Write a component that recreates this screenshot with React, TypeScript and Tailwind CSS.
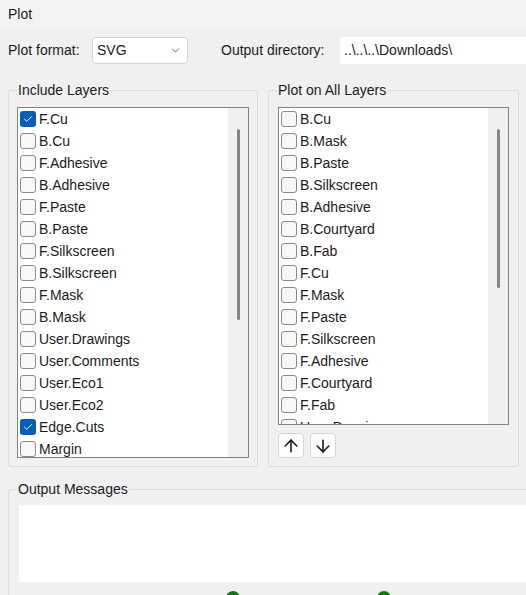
import { ArrowUp, ArrowDown, ChevronDown } from 'lucide-react'

const includeLayers = [
  { name: 'F.Cu', checked: true },
  { name: 'B.Cu', checked: false },
  { name: 'F.Adhesive', checked: false },
  { name: 'B.Adhesive', checked: false },
  { name: 'F.Paste', checked: false },
  { name: 'B.Paste', checked: false },
  { name: 'F.Silkscreen', checked: false },
  { name: 'B.Silkscreen', checked: false },
  { name: 'F.Mask', checked: false },
  { name: 'B.Mask', checked: false },
  { name: 'User.Drawings', checked: false },
  { name: 'User.Comments', checked: false },
  { name: 'User.Eco1', checked: false },
  { name: 'User.Eco2', checked: false },
  { name: 'Edge.Cuts', checked: true },
  { name: 'Margin', checked: false },
]

const allLayers = [
  'B.Cu',
  'B.Mask',
  'B.Paste',
  'B.Silkscreen',
  'B.Adhesive',
  'B.Courtyard',
  'B.Fab',
  'F.Cu',
  'F.Mask',
  'F.Paste',
  'F.Silkscreen',
  'F.Adhesive',
  'F.Courtyard',
  'F.Fab',
  'User.Drawings',
]

function Checkbox({ checked }: { checked: boolean }) {
  if (checked) {
    return (
      <span className="flex h-[16px] w-[16px] shrink-0 items-center justify-center rounded-[3px] bg-[#005fb8]">
        <svg width="10" height="8" viewBox="0 0 10 8" fill="none">
          <path d="M1.5 4.2 L3.8 6.3 L8.5 1.6" stroke="white" strokeWidth="1" strokeLinecap="round" strokeLinejoin="round" />
        </svg>
      </span>
    )
  }
  return <span className="h-[16px] w-[16px] shrink-0 rounded-[3px] border border-[#8a8a8a] bg-[#f7f7f7]" />
}

function LayerRow({ name, checked }: { name: string; checked: boolean }) {
  return (
    <div className="flex h-[22px] shrink-0 items-center gap-[3px] pl-[2px] text-[#1b1b1b]">
      <Checkbox checked={checked} />
      <span className="whitespace-nowrap">{name}</span>
    </div>
  )
}

function Scrollbar({ thumb }: { thumb: string }) {
  return (
    <div className="w-[20px] shrink-0 bg-[#f0f0f0]">
      <div className={`mx-auto mt-[21px] w-[3px] rounded-full bg-[#858585] ${thumb}`} />
    </div>
  )
}

export default function App() {
  return (
    <div
      className="h-[595px] w-[526px] overflow-hidden bg-[#f0f0f0] text-[14px] text-[#1b1b1b]"
      style={{ fontFamily: '"Liberation Sans", Arial, sans-serif' }}
    >
      {/* Title bar */}
      <div className="flex h-[30px] items-center bg-[#f3f3f3] px-[8px] pb-[2px]">Plot</div>

      {/* Format / directory row */}
      <div className="mt-[7px] flex h-[27px] items-center pl-[8px]">
        <span className="w-[84px] shrink-0">Plot format:</span>
        <div className="flex h-[27px] w-[96px] shrink-0 items-center justify-between rounded-[4px] border border-[#d4d4d4] bg-white pl-[4px] pr-[5px]">
          <span>SVG</span>
          <ChevronDown size={13} strokeWidth={1.3} className="text-[#444]" />
        </div>
        <span className="ml-[33px] w-[119px] shrink-0">Output directory:</span>
        <div className="flex h-[27px] w-[200px] shrink-0 items-center bg-white pl-[4px]">..\..\..\Downloads\</div>
      </div>

      {/* Layer groups */}
      <div className="mt-[16px] flex gap-[10px] pl-[8px]">
        <fieldset className="m-0 w-[250px] rounded-[2px] border border-[#dcdcdc] p-0">
          <legend className="ml-[8px] px-[1px] leading-[20px]">Include Layers</legend>
          <div className="px-[8px] pb-[7px] pt-[7px]">
            <div className="flex h-[351px] w-[232px] overflow-hidden border border-[#828282] bg-white">
              <div className="flex flex-1 flex-col overflow-hidden">
                {includeLayers.map((l) => (
                  <LayerRow key={l.name} name={l.name} checked={l.checked} />
                ))}
              </div>
              <Scrollbar thumb="h-[191px]" />
            </div>
          </div>
        </fieldset>

        <fieldset className="m-0 w-[251px] rounded-[2px] border border-[#dcdcdc] p-0">
          <legend className="ml-[8px] px-[1px] leading-[20px]">Plot on All Layers</legend>
          <div className="pl-[9px] pb-[8px] pt-[7px]">
            <div className="flex h-[318px] w-[231px] overflow-hidden border border-[#828282] bg-white">
              <div className="flex flex-1 flex-col overflow-hidden">
                {allLayers.map((n) => (
                  <LayerRow key={n} name={n} checked={false} />
                ))}
              </div>
              <Scrollbar thumb="h-[159px]" />
            </div>
            <div className="mt-[8px] flex gap-[6px]">
              <button className="flex h-[25px] w-[26px] items-center justify-center rounded-[4px] border border-[#d5d5d5] bg-[#fdfdfd] text-[#1b1b1b]">
                <ArrowUp size={20} strokeWidth={1.9} />
              </button>
              <button className="flex h-[25px] w-[26px] items-center justify-center rounded-[4px] border border-[#d5d5d5] bg-[#fdfdfd] text-[#1b1b1b]">
                <ArrowDown size={20} strokeWidth={1.9} />
              </button>
            </div>
          </div>
        </fieldset>
      </div>

      {/* Output messages */}
      <fieldset className="m-0 ml-[8px] mt-[12px] w-[540px] rounded-[2px] border border-[#dcdcdc] p-0">
        <legend className="ml-[8px] px-[1px] leading-[20px]">Output Messages</legend>
        <div className="pl-[10px] pt-[6px]">
          <div className="h-[77px] w-[520px] bg-white" />
          <div className="mt-[9px] flex gap-[137px] pl-[207px]">
            <span className="h-[14px] w-[14px] rounded-full bg-[#0f7b0f]" />
            <span className="h-[14px] w-[14px] rounded-full bg-[#0f7b0f]" />
          </div>
        </div>
      </fieldset>
    </div>
  )
}
